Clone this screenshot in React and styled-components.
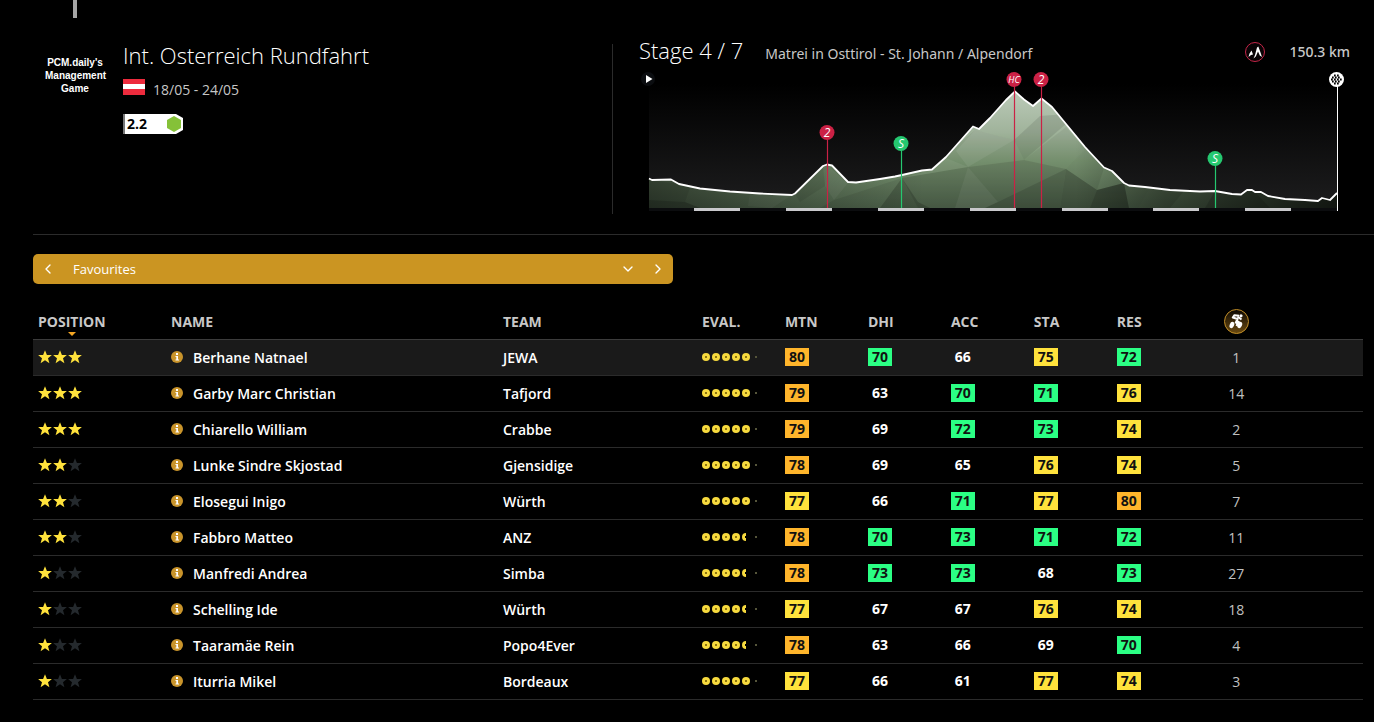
import React from "react";
import styled, { createGlobalStyle } from "styled-components";
import { ChevronDown, ChevronLeft, ChevronRight } from "lucide-react";

const GlobalStyle = createGlobalStyle`
  * { box-sizing: border-box; }
  body {
    margin: 0;
    background: #000;
    color: #fff;
    font-family: "Open Sans", "Noto Sans", sans-serif;
    font-size: 14px;
    line-height: 20px;
  }
  button, select { font: inherit; color: inherit; }
`;

const Page = styled.div`
  padding-left: 33px;
`;

const TopStrip = styled.div`
  height: 44px;
  padding-left: 40px;
`;

const TopMark = styled.div`
  width: 4px;
  height: 18px;
  background: #a6a6a6;
`;

const Header = styled.header`
  display: grid;
  grid-template-columns: 580px 1fr;
  padding-bottom: 20px;
  margin-bottom: 19px;
  border-bottom: 1px solid #2b2b2b;
`;

const RacePanel = styled.section`
  display: flex;
  gap: 18px;
  padding-left: 12px;
  border-right: 1px solid #2b2b2b;
`;

const RaceLogo = styled.div`
  width: 60px;
  padding-top: 12px;
  font: 700 10px/13px "Liberation Sans", sans-serif;
  text-align: center;
`;

const RaceInfo = styled.div`
  display: flex;
  flex-direction: column;
  align-items: flex-start;
`;

const Title = styled.h1`
  margin: 0;
  font-size: 22px;
  font-weight: 300;
  line-height: 22px;
`;

const DateRow = styled.div`
  display: flex;
  align-items: center;
  gap: 8px;
  margin-top: 13px;
  color: #c6c6c6;
`;

const Flag = styled.svg`
  display: block;
  width: 22px;
  height: 16px;
  margin-bottom: 6px;
`;

const CategoryBadge = styled.div`
  display: flex;
  align-items: center;
  justify-content: space-between;
  width: 60px;
  height: 20px;
  margin-top: 13px;
  padding: 0 2px;
  border-left: 2px solid #777;
  background: #fff;
  color: #000;
  font-weight: 700;
  clip-path: polygon(0 0, 53px 0, 60px 4px, 60px 16px, 53px 20px, 0 20px);
`;

const StagePanel = styled.section`
  padding: 0 24px 0 26px;
`;

const StageHead = styled.div`
  display: flex;
  align-items: center;
  height: 24px;
  padding-bottom: 4px;
  color: #c8c8c8;

  ${Title} {
    color: #fff;
    margin: -8px 22px 0 0;
  }
`;

const Route = styled.span`
  flex: 1;
  font-family: "Noto Sans", "Open Sans", sans-serif;
`;

const Distance = styled.span`
  margin: -4px 0 0 24px;
  font-family: "Noto Sans", "Open Sans", sans-serif;
  font-weight: 500;
`;

const TypeIcon = styled.svg`
  width: 20px;
  height: 20px;
  margin-top: -4px;
`;

const Profile = styled.svg`
  display: block;
  width: 100%;
  height: auto;
  font-family: "Open Sans", sans-serif;
  font-style: italic;
`;

const Picker = styled.div`
  display: flex;
  align-items: center;
  width: 640px;
  max-width: 100%;
  height: 30px;
  margin-bottom: 20px;
  border-radius: 5px;
  background: #cb9522;
`;

const StepButton = styled.button`
  display: grid;
  place-items: center;
  width: 30px;
  height: 30px;
  padding: 0;
  border: 0;
  background: none;
  color: #fff;
`;

const SelectWrap = styled.label`
  display: grid;
  flex: 1;
  grid-template-columns: 1fr 30px;
  align-items: center;

  svg {
    grid-area: 1 / 2;
    justify-self: center;
    pointer-events: none;
  }
`;

const ListSelect = styled.select`
  grid-area: 1 / 1 / 2 / 3;
  height: 30px;
  padding: 0 10px;
  border: 0;
  background: none;
  appearance: none;
  color: #fff;
  font-size: 13px;
`;

const Riders = styled.table`
  width: calc(100% - 11px);
  table-layout: fixed;
  border-collapse: separate;
  border-spacing: 0;
`;

const Column = styled.col`
  width: ${(p) => p.$share}%;
`;

const HeadCell = styled.th`
  position: relative;
  height: 36px;
  padding: 0 5px;
  border-bottom: 1px solid #3c3c3c;
  color: #c8c8c8;
  font-weight: 700;
  text-align: ${(p) => (p.$center ? "center" : "left")};

  svg { display: block; margin: auto; }
`;

const SortLabel = styled.span`
  position: relative;
  &::after {
    content: "";
    position: absolute;
    left: calc(50% - 4px);
    top: 20px;
    border: 4px solid transparent;
    border-top-color: #f5a623;
    border-bottom: 0;
  }
`;

const Cell = styled.td`
  height: 36px;
  padding: 0 5px;
  border-bottom: 1px solid #2b2b2b;
  font-weight: 600;
`;

const GlyphCell = styled(Cell)`
  padding-bottom: 1px;
`;

const RankCell = styled(Cell)`
  color: #c0c0c0;
  font-weight: 400;
  text-align: center;
`;

const Row = styled.tr`
  background: ${(p) => (p.$selected ? "#1a1a1a" : "transparent")};
`;

const Icons = styled.svg`
  display: block;
`;

const NameBox = styled.div`
  display: flex;
  align-items: center;
  gap: 10px;
`;

const InfoButton = styled.button`
  width: 12px;
  height: 12px;
  margin-bottom: 1px;
  padding: 0;
  border: 0;
  background: none;
  svg { display: block; }
`;

const fills = { orange: "#ffb52b", yellow: "#ffe23c", green: "#2bff84" };

const Score = styled.span`
  display: block;
  width: 24px;
  height: 18px;
  line-height: 18px;
  font-weight: 700;
  text-align: center;
  background: ${(p) => fills[p.$tone] || "transparent"};
  color: ${(p) => (p.$tone ? "#111" : "#fff")};
`;

const toneOf = (v) => (v >= 78 ? "orange" : v >= 74 ? "yellow" : v >= 70 ? "green" : null);

const riders = [
  [3, "Berhane Natnael", "JEWA", 5, [80, 70, 66, 75, 72], 1],
  [3, "Garby Marc Christian", "Tafjord", 5, [79, 63, 70, 71, 76], 14],
  [3, "Chiarello William", "Crabbe", 5, [79, 69, 72, 73, 74], 2],
  [2, "Lunke Sindre Skjostad", "Gjensidige", 5, [78, 69, 65, 76, 74], 5],
  [2, "Elosegui Inigo", "Würth", 5, [77, 66, 71, 77, 80], 7],
  [2, "Fabbro Matteo", "ANZ", 4.5, [78, 70, 73, 71, 72], 11],
  [1, "Manfredi Andrea", "Simba", 4.5, [78, 73, 73, 68, 73], 27],
  [1, "Schelling Ide", "Würth", 4.5, [77, 67, 67, 76, 74], 18],
  [1, "Taaramäe Rein", "Popo4Ever", 4.5, [78, 63, 66, 69, 70], 4],
  [1, "Iturria Mikel", "Bordeaux", 5, [77, 66, 61, 77, 74], 3],
];

const columns = [10, 24.96, 14.96, 6.24, 6.24, 6.24, 6.24, 6.24, 6.24, 6.24, 6.4];

function Stars({ count }) {
  return (
    <Icons width="44" height="14" role="img" aria-label={`${count} of 3 stars`}>
      {[0, 1, 2].map((i) => (
        <path
          key={i}
          transform={`translate(${i * 15} 0)`}
          d="M7 .3 8.9 5H13.9L10 8.200 11.400 13.200 7 10.300 2.600 13.200 4 8.200 .1 5H5.1Z"
          fill={i < count ? "#ffe23c" : "#24292d"}
        />
      ))}
    </Icons>
  );
}

function Eval({ value }) {
  return (
    <Icons width="58" height="10" role="img" aria-label={`Evaluation ${value}`}>
      {[0, 1, 2, 3, 4].map((i) => {
        const cx = 4 + i * 10;
        return i + 1 <= value ? (
          <g key={i}>
            <circle cx={cx} cy="5" r="4" fill="#f7da3e" />
            <rect x={cx - 1} y="4" width="2" height="2" fill="#8c7410" />
          </g>
        ) : (
          <path key={i} d={`M${cx} 1A4 4 0 0 0 ${cx} 9V6H${cx - 1}V4H${cx}Z`} fill="#f7da3e" />
        );
      })}
      <rect x="53" y="4" width="2" height="2" fill="#55553a" />
    </Icons>
  );
}

const ridge =
  "M649 178.5 652 180 671 179.5 679 184 700 188.5 730 191.5 760 193.5 792 195 795 193.5 823 166 827 164.5 832 165.5 848 182 856 182.5 880 179 895 176.5 902 175 922 170.5 932 169.5 946 157 973 126.5 979 129 990 118 1006 100 1015 91.5 1024 99.5 1033 106 1041.5 98.5 1052 107 1066 124 1085 147 1104 167.5 1112 171 1124 183 1129 185.5 1145 187 1170 190 1200 191.5 1215 191 1232 194 1241 194.5 1247 190 1252 190 1255 192 1261 192 1268 196 1285 199 1305 200 1318 201 1322 198 1330 200 1337 193";

const facets = [
  ["M940 160 975 130 1014 140 1024 160 968 167 902 178Z", "#000", 0.06],
  ["M975 130 1014 140 968 167 956 151Z", "#fff", 0.07],
  ["M1014 140 1040 116 1066 114 1066 124 1024 160Z", "#000", 0.1],
  ["M1024 160 1066 127 1085 149 1066 169Z", "#000", 0.06],
  ["M902 178 968 167 1024 160 1066 169 1060 208 918 208Z", "#000", 0.16],
  ["M902 178 918 202 930 208 880 208Z", "#000", 0.18],
  ["M968 167 998 202 985 208 955 208Z", "#fff", 0.05],
  ["M998 202 1066 169 1060 208 985 208Z", "#000", 0.12],
  ["M1066 169 1097 190 1124 183 1129 208 1060 208Z", "#000", 0.3],
  ["M1066 169 1085 149 1104 168 1097 190Z", "#000", 0.08],
  ["M1097 190 1124 183 1150 188 1138 208 1090 208Z", "#000", 0.12],
  ["M932 170 946 158 968 167 902 178Z", "#fff", 0.06],
  ["M827 165 848 183 834 200 825 186Z", "#fff", 0.06],
  ["M795 194 823 166 825 186 800 202Z", "#000", 0.08],
  ["M834 200 902 178 918 208 820 208Z", "#000", 0.08],
  ["M679 184 690 188 685 202 649 200 649 180Z", "#000", 0.08],
  ["M649 200 685 202 700 208 649 208Z", "#000", 0.22],
  ["M750 193 792 195 772 208 748 206Z", "#fff", 0.05],
  ["M1150 188 1184 191 1170 208 1138 208Z", "#000", 0.1],
  ["M1215 191 1255 192 1270 208 1205 208Z", "#000", 0.15],
];

const markers = [
  [827, 132, "2", "#cb2145"],
  [901, 143, "S", "#25c870"],
  [1014, 79, "HC", "#cb2145"],
  [1041, 79, "2", "#cb2145"],
  [1215, 158, "S", "#25c870"],
];

const kmBars = [694, 786, 878, 970, 1062, 1153, 1245];

const checks = [
  [-2, -4], [1, -4], [-4, -2], [-1, -2], [2, -2], [-5, 0], [-2, 0], [1, 0], [4, 0],
  [-4, 2], [-1, 2], [2, 2], [-2, 4], [1, 4],
];

function StageProfile() {
  return (
    <Profile viewBox="639 68 711 146" role="img" aria-label="Stage profile">
      <defs>
        <linearGradient id="sky" x1="0" y1="84" x2="0" y2="208" gradientUnits="userSpaceOnUse">
          <stop offset="0" stopColor="#000" />
          <stop offset="1" stopColor="#1d1d1e" />
        </linearGradient>
        <linearGradient id="slope" x1="0" y1="91" x2="0" y2="208" gradientUnits="userSpaceOnUse">
          <stop offset="0" stopColor="#bccbb9" />
          <stop offset="0.35" stopColor="#a0b39b" />
          <stop offset="0.6" stopColor="#7c9874" />
          <stop offset="1" stopColor="#536950" />
        </linearGradient>
        <linearGradient id="shade" x1="649" y1="0" x2="1337" y2="0" gradientUnits="userSpaceOnUse">
          <stop offset="0" stopColor="#000" stopOpacity="0.5" />
          <stop offset="0.25" stopColor="#000" stopOpacity="0.2" />
          <stop offset="0.4" stopColor="#000" stopOpacity="0" />
          <stop offset="0.62" stopColor="#000" stopOpacity="0" />
          <stop offset="0.75" stopColor="#000" stopOpacity="0.4" />
          <stop offset="1" stopColor="#000" stopOpacity="0.8" />
        </linearGradient>
        <clipPath id="land">
          <path d={`${ridge}V208H649Z`} />
        </clipPath>
      </defs>
      <rect x="649" y="84" width="688" height="124" fill="url(#sky)" />
      <rect x="649" y="208" width="688" height="3" fill="#0b0c0e" />
      <g clipPath="url(#land)">
        <rect x="649" y="84" width="688" height="124" fill="url(#slope)" />
        {facets.map(([d, fill, opacity]) => (
          <path key={d} d={d} fill={fill} opacity={opacity} />
        ))}
        <rect x="649" y="84" width="688" height="124" fill="url(#shade)" />
      </g>
      <path d={ridge} fill="none" stroke="#fff" strokeWidth="1.8" strokeLinejoin="round" />
      {kmBars.map((x) => (
        <rect key={x} x={x} y="208" width="46" height="3" fill="#c9c9cc" />
      ))}
      <circle cx="648" cy="79" r="7" fill="#0b0d10" />
      <path d="M646 75V83L652.500 79Z" fill="#fff" />
      {markers.map(([x, y, label, color]) => (
        <g key={x}>
          <path d={`M${x + 0.5} ${y}V208`} stroke={color} strokeWidth="1.2" />
          <circle cx={x} cy={y + 0.5} r="7.500" fill={color} />
          <text
            x={x}
            y={y + (label === "HC" ? 4 : 5)}
            textAnchor="middle"
            fontSize={label === "HC" ? 9 : 12}
            fontWeight="500"
            fill="#fff"
          >
            {label}
          </text>
        </g>
      ))}
      <rect x="1337" y="80" width="1" height="131" fill="#fff" />
      <circle cx="1336.500" cy="79.500" r="7.500" fill="#fff" />
      {checks.map(([x, y]) => (
        <rect key={`${x},${y}`} x={1336 + x} y={78.5 + y} width="1.700" height="2" fill="#000" />
      ))}
    </Profile>
  );
}

export default function App() {
  return (
    <Page>
      <GlobalStyle />
      <TopStrip>
        <TopMark />
      </TopStrip>
      <Header>
        <RacePanel>
          <RaceLogo>
            PCM.daily's
            <br />
            Management
            <br />
            Game
          </RaceLogo>
          <RaceInfo>
            <Title>Int. Osterreich Rundfahrt</Title>
            <DateRow>
              <Flag viewBox="0 0 22 16" role="img" aria-label="Austria">
                <path fill="#ed2b3d" d="M0 0h22v16H0z" />
                <path fill="#fff" d="M0 5h22v5H0z" />
              </Flag>
              18/05 - 24/05
            </DateRow>
            <CategoryBadge>
              2.2
              <svg width="14" height="16" aria-hidden="true">
                <path d="M7 0 14 4V12L7 16 0 12V4Z" fill="#85c138" />
              </svg>
            </CategoryBadge>
          </RaceInfo>
        </RacePanel>
        <StagePanel>
          <StageHead>
            <Title as="h2">Stage 4 / 7</Title>
            <Route>Matrei in Osttirol - St. Johann / Alpendorf</Route>
            <TypeIcon viewBox="0 0 20 20" role="img" aria-label="Mountain stage">
              <circle cx="10" cy="10" r="9.500" fill="#080305" stroke="#c52548" />
              <path
                d="M3.500 15 4.500 11.500 6.500 8.500 8 12.500 6 13ZM8.500 16.500 10 13 12 5.500 13.300 4.500 15 9 17 15 14.800 13.500 13 9.500 10.800 14.500Z"
                fill="#fff"
              />
            </TypeIcon>
            <Distance>150.3 km</Distance>
          </StageHead>
          <StageProfile />
        </StagePanel>
      </Header>

      <Picker>
        <StepButton type="button" aria-label="Previous list">
          <ChevronLeft size={16} />
        </StepButton>
        <SelectWrap>
          <ListSelect aria-label="List" defaultValue="Favourites">
            <option>Favourites</option>
          </ListSelect>
          <ChevronDown size={16} />
        </SelectWrap>
        <StepButton type="button" aria-label="Next list">
          <ChevronRight size={16} />
        </StepButton>
      </Picker>

      <Riders>
        <colgroup>
          {columns.map((share, i) => (
            <Column key={i} $share={share} />
          ))}
        </colgroup>
        <thead>
          <tr>
            <HeadCell aria-sort="descending">
              <SortLabel>POSITION</SortLabel>
            </HeadCell>
            {["NAME", "TEAM", "EVAL.", "MTN", "DHI", "ACC", "STA", "RES"].map((h) => (
              <HeadCell key={h}>{h}</HeadCell>
            ))}
            <HeadCell $center>
              <svg width="25" height="25" viewBox="0 0 25 25" role="img" aria-label="Startlist number">
                <defs>
                  <linearGradient id="gold" x1="0" y1="0" x2="0" y2="1">
                    <stop offset="0" stopColor="#0d0904" />
                    <stop offset="1" stopColor="#6b4a10" />
                  </linearGradient>
                </defs>
                <circle cx="12.500" cy="12.500" r="12" fill="url(#gold)" stroke="#c08d27" />
                <g fill="#fff">
                  <ellipse cx="7.900" cy="16" rx="2.200" ry="3.300" transform="rotate(22 7.900 16)" />
                  <ellipse cx="15.800" cy="16" rx="2.200" ry="3.300" transform="rotate(22 15.800 16)" />
                  <circle cx="17" cy="6.800" r="1.600" />
                </g>
                <path
                  d="M15 6.800 10.500 6.200 8.800 8.500 13.500 10 11.500 14.500M13.500 7.500 17.500 10.500M15 12 12.500 17"
                  fill="none"
                  stroke="#fff"
                  strokeWidth="2.100"
                  strokeLinejoin="round"
                />
              </svg>
            </HeadCell>
            <HeadCell />
          </tr>
        </thead>
        <tbody>
          {riders.map(([stars, name, team, evaluation, scores, rank], i) => (
            <Row key={name} $selected={i === 0}>
              <GlyphCell>
                <Stars count={stars} />
              </GlyphCell>
              <Cell>
                <NameBox>
                  <InfoButton type="button" aria-label={`About ${name}`}>
                    <svg width="12" height="12">
                      <circle cx="6" cy="6" r="6" fill="#c9942b" />
                      <path d="M5 2H7V4H5ZM4.500 5H7V8.500H8V9.500H4.500V8.500H5.300V6H4.500Z" fill="#fff" />
                    </svg>
                  </InfoButton>
                  {name}
                </NameBox>
              </Cell>
              <Cell>{team}</Cell>
              <GlyphCell>
                <Eval value={evaluation} />
              </GlyphCell>
              {scores.map((s, k) => (
                <GlyphCell key={k}>
                  <Score $tone={toneOf(s)}>{s}</Score>
                </GlyphCell>
              ))}
              <RankCell>{rank}</RankCell>
              <Cell />
            </Row>
          ))}
        </tbody>
      </Riders>
    </Page>
  );
}
